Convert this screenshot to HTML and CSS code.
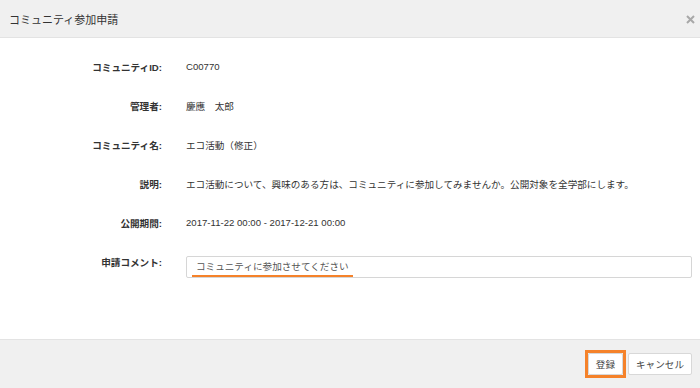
FILE: index.html
```html
<!DOCTYPE html>
<html lang="ja">

<head>
    <meta charset="UTF-8">
    <meta name="viewport" content="width=device-width, initial-scale=1.0">
    <title>コミュニティ参加申請</title>
    <link rel="stylesheet" href="styles.css">
</head>

<body>
    <div class="modal">
        <!-- ヘッダー -->
        <div class="modal-header">
            <h2>コミュニティ参加申請</h2>
            <button class="close-btn" aria-label="閉じる">
                <svg width="9" height="9" viewBox="0 0 9 9">
                    <path d="M1 1 L8 8 M8 1 L1 8" stroke="#a8a8a8" stroke-width="2" />
                </svg>
            </button>
        </div>

        <!-- 申請内容 -->
        <div class="modal-body">
            <div class="form-row">
                <div class="form-label">コミュニティID:</div>
                <div class="form-value">C00770</div>
            </div>
            <div class="form-row">
                <div class="form-label">管理者:</div>
                <div class="form-value">慶應　太郎</div>
            </div>
            <div class="form-row">
                <div class="form-label">コミュニティ名:</div>
                <div class="form-value">エコ活動（修正）</div>
            </div>
            <div class="form-row">
                <div class="form-label">説明:</div>
                <div class="form-value">エコ活動について、興味のある方は、コミュニティに参加してみませんか。公開対象を全学部にします。</div>
            </div>
            <div class="form-row">
                <div class="form-label">公開期間:</div>
                <div class="form-value">2017-11-22 00:00 - 2017-12-21 00:00</div>
            </div>
            <div class="form-row comment-row">
                <div class="form-label">申請コメント:</div>
                <div class="comment-box">
                    <span class="marked">コミュニティに参加させてください</span>
                </div>
            </div>
        </div>

        <!-- フッター -->
        <div class="modal-footer">
            <div class="highlight">
                <button class="btn">登録</button>
            </div>
            <button class="btn">キャンセル</button>
        </div>
    </div>
</body>

</html>
```

FILE: styles.css
```css
:root {
    --panel-bg: #f0f0f0;
    --line-color: #e3e3e3;
    --text-color: #333;
    --mark-color: #f5822a;
}

* {
    box-sizing: border-box;
    margin: 0;
    padding: 0;
}

body {
    font-family: 'Liberation Sans', 'Noto Sans CJK JP', Arial, sans-serif;
    color: var(--text-color);
    background-color: #fff;
    height: 388px;
    overflow: hidden;
}

.modal {
    display: flex;
    flex-direction: column;
    height: 388px;
}

/* ヘッダー */
.modal-header {
    height: 38px;
    padding: 0 9px;
    background-color: var(--panel-bg);
    border-bottom: 1px solid var(--line-color);
    display: flex;
    justify-content: space-between;
    align-items: center;
}

.modal-header h2 {
    font-size: 11px;
    font-weight: normal;
    color: #333;
}

.close-btn {
    border: none;
    background: none;
    width: 9px;
    height: 9px;
    display: flex;
    cursor: pointer;
    margin-right: -4px;
    margin-top: 2px;
}

/* 申請内容 */
.modal-body {
    flex-grow: 1;
    padding-top: 9px;
}

.form-row {
    display: flex;
    align-items: center;
    height: 39px;
    font-size: 9.6px;
}

.form-label {
    width: 162px;
    text-align: right;
    font-weight: bold;
}

.form-value {
    padding-left: 24px;
}

.comment-row {
    align-items: flex-start;
    padding-top: 14px;
    height: auto;
}

.comment-row .form-label {
    line-height: 14px;
}

.comment-box {
    margin-left: 24px;
    width: 506px;
    height: 22px;
    border: 1px solid #d6d6d6;
    border-radius: 2px;
    padding: 3px 0 0 5px;
    font-size: 9.6px;
    color: #555;
}

.marked {
    display: inline-block;
    padding: 0 4px 1px;
    line-height: 14px;
    border-bottom: 2px solid var(--mark-color);
}

/* フッター */
.modal-footer {
    height: 49px;
    background-color: var(--panel-bg);
    border-top: 1px solid var(--line-color);
    display: flex;
    justify-content: flex-end;
    align-items: center;
    gap: 2px;
    padding: 0 8px 1px 0;
}

.highlight {
    border: 3px solid var(--mark-color);
    display: flex;
}

.btn {
    height: 22px;
    padding: 0 7px;
    background-color: #fff;
    border: 1px solid #d8d8d8;
    border-radius: 2px;
    font-family: inherit;
    font-size: 9.6px;
    color: #444;
    cursor: pointer;
}
```
